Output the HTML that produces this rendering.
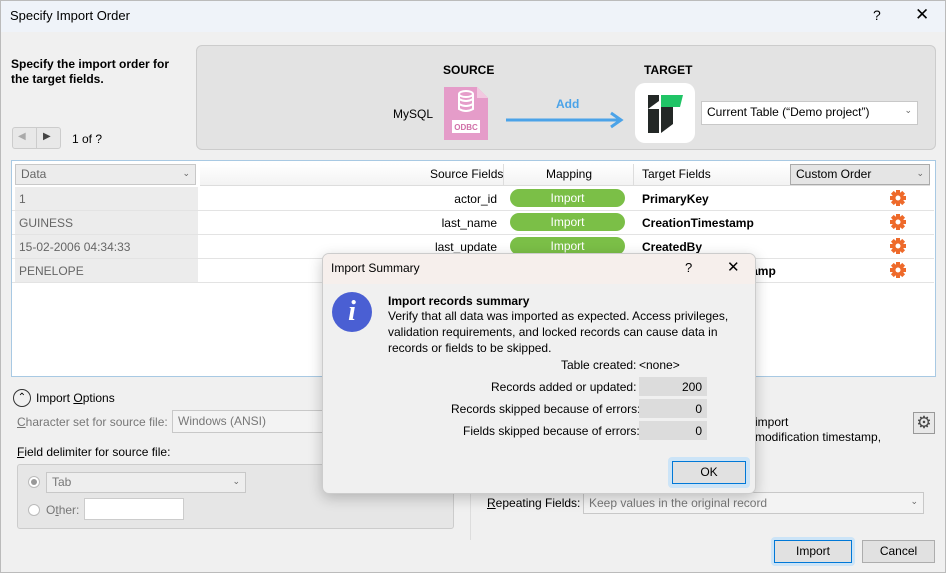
<!DOCTYPE html>
<html><head><style>
*{box-sizing:border-box;margin:0;padding:0}
body{width:946px;height:573px;overflow:hidden;background:#f0f0f0;font-family:"Liberation Sans",sans-serif;font-size:12px;color:#000;position:relative}
.a{position:absolute;white-space:nowrap}
.b{font-weight:bold}
.combo{position:absolute;border:1px solid #c8c8c8;background:#fff;padding:3px 5px;font-size:12px}
.chev{position:absolute;right:5px;top:3px;font-size:9px;color:#666}
.pill{position:absolute;left:510px;width:115px;height:18px;border-radius:9px;background:#7bbf47;color:#fff;text-align:center;line-height:18px;font-size:12px}
.gear{position:absolute;left:890px}
.row{position:absolute;left:12px;width:922px;height:24px;border-bottom:1px solid #e3e3e3;background:#fff}
.row .l{position:absolute;left:3px;top:0;width:183px;height:23px;background:#ececec;color:#666;padding:5px 4px}
.row .s{position:absolute;right:437px;top:5px}
.row .t{position:absolute;left:630px;top:5px;font-weight:bold}
.val{position:absolute;left:639px;width:68px;height:19px;background:#dcdcdc;text-align:right;padding:3px 5px}
.btn{position:absolute;border:1px solid #adadad;background:#e1e1e1;text-align:center;line-height:21px;font-size:12px}
</style></head><body>
<svg width="0" height="0" style="position:absolute"><defs><g id="g"><g fill="#ee6a2b"><rect x="6" y="0" width="4" height="16"/><rect x="0" y="6" width="16" height="4"/><rect x="6" y="0" width="4" height="16" transform="rotate(45 8 8)"/><rect x="6" y="0" width="4" height="16" transform="rotate(-45 8 8)"/><circle cx="8" cy="8" r="6"/></g><circle cx="8" cy="8" r="2.5" fill="#fff"/></g></defs></svg>
<div class="a" style="left:0;top:0;width:946px;height:32px;background:#eff3f9"></div>
<div class="a" style="left:10px;top:8px;font-size:13px">Specify Import Order</div>
<div class="a" style="left:873px;top:7px;font-size:14px">?</div>
<div class="a" style="left:915px;top:5px;font-size:17px">✕</div>

<div class="a b" style="left:11px;top:57px;line-height:15px">Specify the import order for<br>the target fields.</div>
<div class="a" style="left:12px;top:127px;width:49px;height:22px;border:1px solid #ccc;background:#e8e8e8;border-radius:3px"></div>
<div class="a" style="left:36px;top:127px;width:1px;height:22px;background:#ccc"></div>
<div class="a" style="left:18px;top:131px;color:#aaa;font-size:10px">◀</div>
<div class="a" style="left:43px;top:131px;color:#444;font-size:10px">▶</div>
<div class="a" style="left:72px;top:132px">1 of ?</div>

<div class="a" style="left:196px;top:45px;width:740px;height:105px;background:#e3e3e3;border:1px solid #ccc;border-radius:6px"></div>
<div class="a b" style="left:443px;top:63px">SOURCE</div>
<div class="a b" style="left:644px;top:63px">TARGET</div>
<div class="a" style="left:393px;top:107px">MySQL</div>
<svg class="a" style="left:444px;top:87px" width="44" height="53"><path d="M0 0H33L44 11V53H0Z" fill="#e59cc9"/><path d="M33 0V11H44Z" fill="#f2c8e0"/><ellipse cx="22" cy="7" rx="7" ry="3" fill="none" stroke="#fff" stroke-width="2"/><path d="M15 7V22Q22 26 29 22V7M15 12Q22 16 29 12M15 17Q22 21 29 17" fill="none" stroke="#fff" stroke-width="2"/><rect x="8" y="33" width="28" height="13" fill="#fff"/><text x="22" y="43" font-size="8" font-weight="bold" fill="#d070a8" text-anchor="middle" font-family="Liberation Sans">ODBC</text></svg>
<div class="a b" style="left:556px;top:97px;color:#4ba3e8">Add</div>
<svg class="a" style="left:505px;top:110px" width="120" height="20"><path d="M1 10H116M106 3L116 10L106 17" stroke="#4ba3e8" stroke-width="3" fill="none"/></svg>
<div class="a" style="left:635px;top:83px;width:60px;height:60px;background:#fff;border-radius:10px"></div>
<svg class="a" style="left:648px;top:95px" width="36" height="38"><path d="M0 0H11V38H0Z" fill="#232826"/><path d="M13 0H35L32 12H13Z" fill="#20c466"/><path d="M13 12H25V29L13 38Z" fill="#232826"/><path d="M0 14L11 6V14Z" fill="#fff"/></svg>
<div class="combo" style="left:701px;top:101px;width:217px;height:24px">Current Table (“Demo project”)<span class="chev">⌄</span></div>

<div class="a" style="left:11px;top:160px;width:925px;height:217px;background:#fff;border:1px solid #a8c9e3"></div>
<div class="combo" style="left:15px;top:164px;width:181px;height:21px;background:#ececec;color:#666;padding:2px 5px">Data<span class="chev">⌄</span></div>
<div class="a" style="left:200px;top:164px;width:730px;height:22px;background:linear-gradient(#fff,#f3f3f3);border-bottom:1px solid #ddd"></div>
<div class="a" style="left:430px;top:167px">Source Fields</div>
<div class="a" style="left:546px;top:167px">Mapping</div>
<div class="a" style="left:642px;top:167px">Target Fields</div>
<div class="a" style="left:503px;top:164px;width:1px;height:22px;background:#ddd"></div>
<div class="a" style="left:633px;top:164px;width:1px;height:22px;background:#ddd"></div>
<div class="combo" style="left:790px;top:164px;width:140px;height:21px;background:#e5e5e5;border-color:#aaa;padding:2px 5px">Custom Order<span class="chev">⌄</span></div>

<div class="row" style="top:187px"><div class="l">1</div><div class="s">actor_id</div><div class="t">PrimaryKey</div></div>
<div class="row" style="top:211px"><div class="l">GUINESS</div><div class="s">last_name</div><div class="t">CreationTimestamp</div></div>
<div class="row" style="top:235px"><div class="l">15-02-2006 04:34:33</div><div class="s">last_update</div><div class="t">CreatedBy</div></div>
<div class="row" style="top:259px"><div class="l">PENELOPE</div><div class="t">ModificationTimestamp</div></div>
<div class="pill" style="top:189px">Import</div><div class="pill" style="top:213px">Import</div><div class="pill" style="top:237px">Import</div>
<svg class="gear" style="top:190px" width="16" height="16"><use href="#g"/></svg>
<svg class="gear" style="top:214px" width="16" height="16"><use href="#g"/></svg>
<svg class="gear" style="top:238px" width="16" height="16"><use href="#g"/></svg>
<svg class="gear" style="top:262px" width="16" height="16"><use href="#g"/></svg>

<div class="a" style="left:13px;top:389px;width:18px;height:18px;border:1.5px solid #333;border-radius:50%;text-align:center;font-size:10px;line-height:15px">⌃</div>
<div class="a" style="left:36px;top:391px">Import <u>O</u>ptions</div>
<div class="a" style="left:17px;top:415px;color:#777"><u>C</u>haracter set for source file:</div>
<div class="combo" style="left:172px;top:410px;width:160px;height:23px;background:#f3f3f3;color:#777">Windows (ANSI)</div>
<div class="a" style="left:17px;top:445px"><u>F</u>ield delimiter for source file:</div>
<div class="a" style="left:17px;top:464px;width:437px;height:65px;background:#e6e6e6;border:1px solid #ccc;border-radius:3px"></div>
<div class="a" style="left:28px;top:476px;width:12px;height:12px;border:1px solid #bbb;border-radius:50%;background:#fff"><div style="margin:2px;width:6px;height:6px;border-radius:50%;background:#999"></div></div>
<div class="combo" style="left:46px;top:472px;width:200px;height:21px;background:#eee;color:#777;padding:2px 5px">Tab<span class="chev">⌄</span></div>
<div class="a" style="left:28px;top:504px;width:12px;height:12px;border:1px solid #bbb;border-radius:50%;background:#fff"></div>
<div class="a" style="left:46px;top:503px;color:#777">O<u>t</u>her:</div>
<div class="a" style="left:84px;top:498px;width:100px;height:22px;background:#fff;border:1px solid #ccc"></div>
<div class="a" style="left:470px;top:480px;width:1px;height:60px;background:#ddd"></div>
<div class="a" style="left:755px;top:415px">import</div>
<div class="a" style="left:755px;top:430px">modification timestamp,</div>
<div class="a" style="left:913px;top:412px;width:22px;height:22px;border:1px solid #999;background:#e8e8e8;text-align:center;font-size:17px;line-height:20px;color:#444">⚙</div>
<div class="a" style="left:487px;top:496px"><u>R</u>epeating Fields:</div>
<div class="combo" style="left:583px;top:492px;width:341px;height:22px;background:#f3f3f3;color:#777;padding:3px 5px">Keep values in the original record<span class="chev">⌄</span></div>
<div class="a" style="left:771px;top:537px;width:84px;height:29px;border-radius:4px;background:#cce4f7"></div>
<div class="btn" style="left:774px;top:540px;width:78px;height:23px;border:1px solid #0078d7">Import</div>
<div class="btn" style="left:862px;top:540px;width:73px;height:23px">Cancel</div>
<div class="a" style="left:0;top:0;width:946px;height:573px;border:1px solid #bbb"></div>

<div class="a" style="left:322px;top:253px;width:434px;height:241px;background:#f0f0f0;border:1px solid #ccc;border-radius:7px;box-shadow:0 4px 14px rgba(0,0,0,.22);overflow:hidden">
<div style="height:30px;background:#f6efec"></div></div>
<div class="a" style="left:331px;top:261px">Import Summary</div>
<div class="a" style="left:685px;top:260px;font-size:13px">?</div>
<div class="a" style="left:727px;top:258px;font-size:15px">✕</div>
<div class="a" style="left:332px;top:292px;width:40px;height:40px;border-radius:50%;background:#4a5fd3;color:#fff;text-align:center;font:italic bold 28px 'Liberation Serif',serif;line-height:40px">i</div>
<div class="a b" style="left:388px;top:294px">Import records summary</div>
<div class="a" style="left:388px;top:308px;line-height:16px">Verify that all data was imported as expected. Access privileges,<br>validation requirements, and locked records can cause data in<br>records or fields to be skipped.</div>
<div class="a" style="left:561px;top:358px">Table created:</div><div class="a" style="left:639px;top:358px">&lt;none&gt;</div>
<div class="a" style="left:491px;top:380px">Records added or updated:</div><div class="val" style="top:377px">200</div>
<div class="a" style="left:451px;top:402px">Records skipped because of errors:</div><div class="val" style="top:399px">0</div>
<div class="a" style="left:463px;top:424px">Fields skipped because of errors:</div><div class="val" style="top:421px">0</div>
<div class="a" style="left:668px;top:457px;width:82px;height:31px;border-radius:4px;background:#cce4f7"></div>
<div class="btn" style="left:672px;top:461px;width:74px;height:23px;border:1px solid #0078d7">OK</div>
</body></html>
